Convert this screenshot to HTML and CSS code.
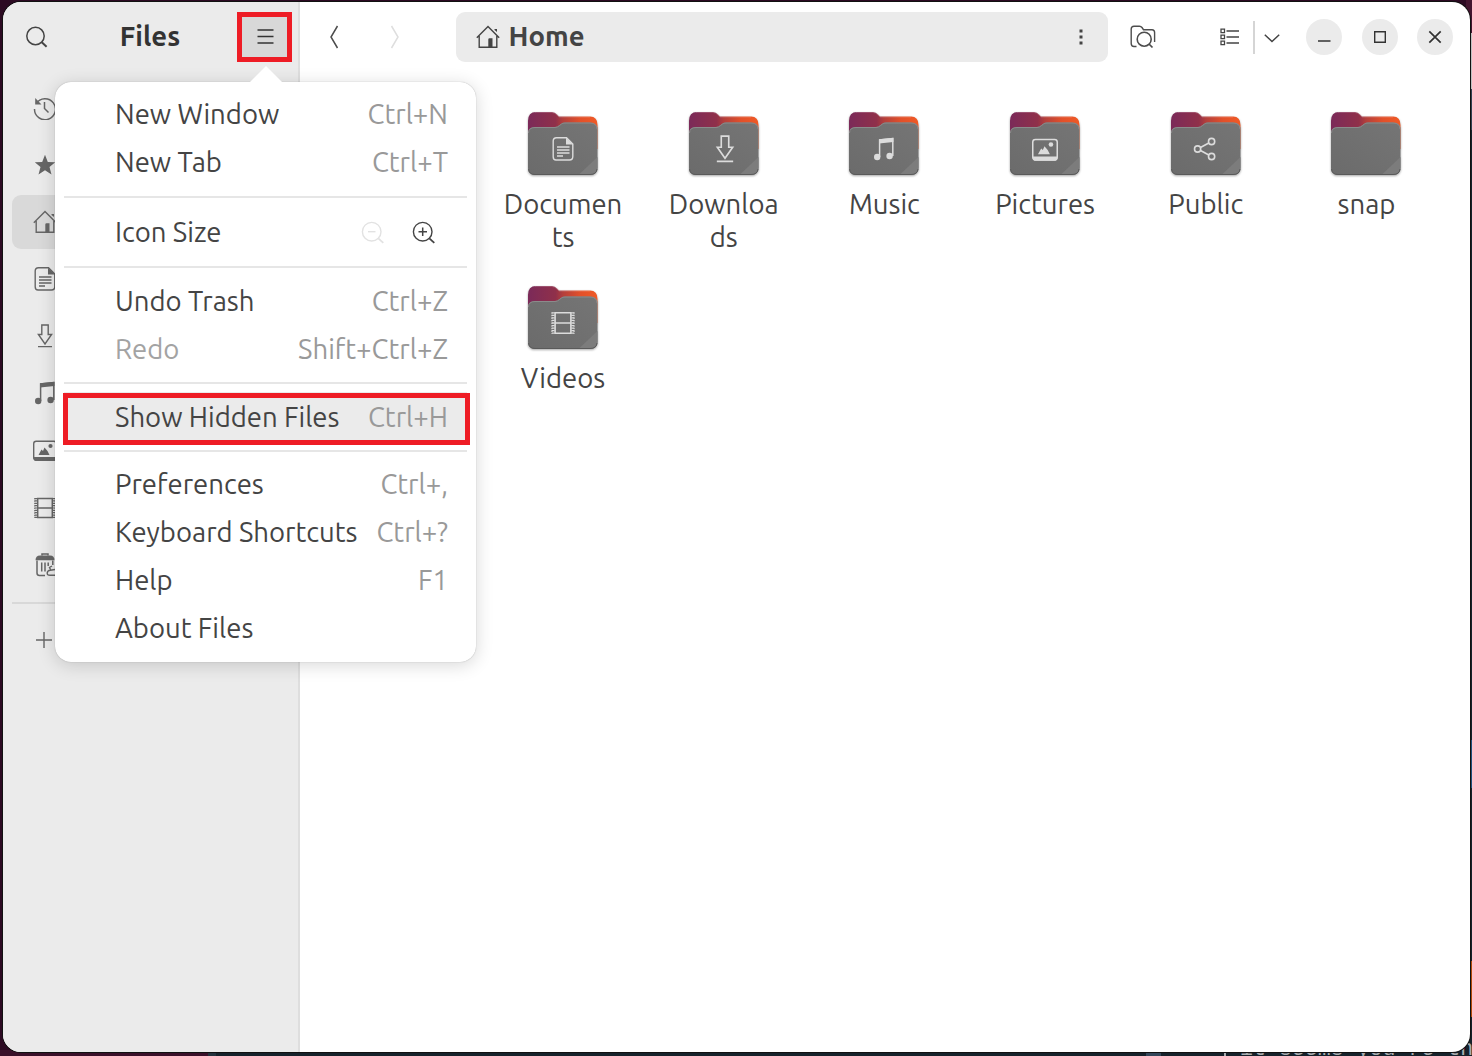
FILE: index.html
```html
<!DOCTYPE html>
<html lang="en">
<head>
<meta charset="utf-8">
<title>Files</title>
<link rel="stylesheet" href="styles.css">
</head>
<body>
<svg class="defs" aria-hidden="true">
  <defs>
    <linearGradient id="tab" x1="0" y1="0" x2="1" y2="0">
      <stop offset="0" stop-color="#7b2a59"/><stop offset=".4" stop-color="#90304a"/><stop offset=".5" stop-color="#b33f3c"/><stop offset=".75" stop-color="#e2502a"/><stop offset="1" stop-color="#f05a26"/>
    </linearGradient>
    <linearGradient id="front" x1="0" y1="1" x2="1" y2="0">
      <stop offset="0" stop-color="#6b6b6b"/><stop offset="1" stop-color="#757575"/>
    </linearGradient>
    <symbol id="folder" viewBox="0 0 76 74">
      <path d="M3 12Q3 3 11 3H27Q30 3 32 5.500L34 7.500H65Q72.500 7.500 72.500 16V40H3Z" fill="url(#tab)"/>
      <path d="M10 3.500H27Q30 3.500 32 6L34 8H65" fill="none" stroke="#fff" stroke-opacity=".18"/>
      <path d="M3 24Q3 18 10 18H30Q32.500 18 34.500 16L36.500 14.500Q37.500 13.500 40 13.500H65Q72.500 13.500 72.500 21V59Q72.500 66 65 66H10Q3 66 3 59Z" fill="url(#front)"/>
      <path d="M3.500 24Q3.500 18.500 10 18.500H30Q32.500 18.500 34.500 16.500L36.500 15Q37.500 14 40 14H65Q72 14 72 20" fill="none" stroke="#8b8b8b"/>
      <path d="M54 65.500L72.500 48V59Q72.500 65.500 65 65.500Z" fill="#7c7c7c"/>
      <path d="M3.500 60Q4 65.500 10 65.500H65Q71.500 65.500 72 60" fill="none" stroke="#5a5a5a"/>
    </symbol>
    <symbol id="recent" viewBox="0 0 24 24"><path d="M3.200 7.500A10.500 10.500 0 1 1 1.500 13M11.500 6V12.500L15.500 16.500" fill="none" stroke="currentColor" stroke-width="1.500"/><path d="M2.200 2V8.500H8.500Z" fill="currentColor"/></symbol>
    <symbol id="star" viewBox="0 0 24 24"><path d="M12 1.800L14.800 8.900L22.200 9.300L16.500 14.100L18.500 21.500L12 17.300L5.500 21.500L7.500 14.100L1.800 9.300L9.200 8.900Z" fill="currentColor"/></symbol>
    <symbol id="home" viewBox="0 0 24 24"><path d="M.8 12.800L12 1.500L23.200 12.800M3.200 11V22.300H20.800V11" fill="none" stroke="currentColor" stroke-width="1.400"/><path d="M12.300 22V14.500Q12.300 13.300 13.500 13.300H16.500V22ZM18.500 4H21V7L18.500 5Z" fill="currentColor"/></symbol>
    <symbol id="document" viewBox="0 0 24 24"><path d="M5.500 .8H15.500L21.800 7V19.500Q21.800 23 18.500 23H5Q2.200 23 2.200 19.800V4Q2.200 .8 5.500 .8ZM6 10H18.500M6 13H18.500M6 16H18.500M6 19H12" fill="none" stroke="currentColor" stroke-width="1.400"/><path d="M15 .8V7.500H22Z" fill="currentColor"/></symbol>
    <symbol id="download" viewBox="0 0 24 24"><path d="M8.800 1H15.200V10.500H18.600L12 20L5.400 10.500H8.800ZM5 22.600H19" fill="none" stroke="currentColor" stroke-width="1.400"/></symbol>
    <symbol id="music" viewBox="0 0 24 24"><path d="M7.600 20V3L20.800 1.600V19" fill="none" stroke="currentColor" stroke-width="1.500"/><path d="M7 2.300L21.400 .8V5L7 6.500Z" fill="currentColor"/><circle cx="5.200" cy="20" r="3.200" fill="currentColor"/><circle cx="17.600" cy="19" r="3.200" fill="currentColor"/></symbol>
    <symbol id="picture" viewBox="0 0 24 24"><rect x=".7" y="2.200" width="22.600" height="19" rx="2.500" fill="none" stroke="currentColor" stroke-width="1.400"/><path d="M.7 18H23.300V19.500Q23 22 20.500 22H3.500Q1 22 .7 19.500ZM5.500 16L8.500 10.500L10 12L11.500 8.500L14.500 12L16.500 16Z" fill="currentColor"/><circle cx="17.500" cy="7" r="2.100" fill="currentColor"/></symbol>
    <symbol id="video" viewBox="0 0 24 24"><path d="M4.700 2.500H19.300V21.500H4.700ZM4.700 12H19.300" fill="none" stroke="currentColor" stroke-width="1.500"/><path d="M1.800 2V22M22.200 2V22" fill="none" stroke="currentColor" stroke-dasharray="1.400 1"/><path d="M3 2V22M21 2V22" fill="none" stroke="currentColor" stroke-width="2.600" stroke-dasharray="1.200 1.150"/></symbol>
    <symbol id="trash" viewBox="0 0 24 24"><path d="M4 7.500V20Q4 22.500 6.500 22.500H12M8.700 9.500V18.500M12 9.500V18.500M15.200 9.500V13M19.800 7.500V12M9 2.500V1H15V2.500" fill="none" stroke="currentColor" stroke-width="1.500"/><path d="M2.500 7.300Q2.500 2.500 7 2.500H17Q21.500 2.500 21.500 7.300Z" fill="currentColor"/><path d="M17.500 16.500L16.500 14.500L19 13M17 22.300Q14 22.300 14.200 19.800Q14.500 17.500 17.300 17.200L22 16.500M17 22.300H23" fill="none" stroke="currentColor" stroke-width="1.400"/></symbol>
    <symbol id="share" viewBox="0 0 24 24"><g fill="none" stroke="currentColor" stroke-width="1.600"><circle cx="4.600" cy="12" r="3.100"/><circle cx="18.600" cy="4.500" r="3.100"/><circle cx="18.600" cy="19.500" r="3.100"/><path d="M7.500 10.500L15.800 6M7.500 13.500L15.800 18"/></g></symbol>
    <symbol id="search" viewBox="0 0 24 24"><circle cx="10.500" cy="11" r="8.700" fill="none" stroke="currentColor" stroke-width="1.500"/><path d="M16.800 17.200L21.600 21.700" stroke="currentColor" stroke-width="2"/></symbol>
    <symbol id="zoom" viewBox="0 0 24 24"><circle cx="10.700" cy="10.700" r="9.300" fill="none" stroke="currentColor" stroke-width="1.400"/><path d="M17.300 17.300L22.300 21.800" stroke="currentColor" stroke-width="1.800"/></symbol>
  </defs>
</svg>

<div class="terminal-line">it seems you're th</div>
<div class="window">
  <aside class="sidebar">
    <header class="side-header">
      <svg class="icon search"><use href="#search"/></svg>
      <h1>Files</h1>
      <button class="menu-button marked" aria-label="Menu"><svg width="17" height="15" viewBox="0 0 17 15"><path d="M.5 1H16.500M.5 7.500H16.500M.5 14H16.500" stroke="#333" stroke-width="1.400"/></svg></button>
    </header>
    <nav class="places">
      <a class="place"><svg class="icon"><use href="#recent"/></svg></a>
      <a class="place"><svg class="icon"><use href="#star"/></svg></a>
      <a class="place selected"><svg class="icon"><use href="#home"/></svg></a>
      <a class="place"><svg class="icon"><use href="#document"/></svg></a>
      <a class="place"><svg class="icon"><use href="#download"/></svg></a>
      <a class="place"><svg class="icon"><use href="#music"/></svg></a>
      <a class="place"><svg class="icon"><use href="#picture"/></svg></a>
      <a class="place"><svg class="icon"><use href="#video"/></svg></a>
      <a class="place"><svg class="icon"><use href="#trash"/></svg></a>
    </nav>
    <hr class="side-rule">
    <svg class="add" viewBox="0 0 18 18"><path d="M1 9H17M9 1V17" stroke="#666" stroke-width="1.400"/></svg>
  </aside>

  <main class="content">
    <header class="toolbar">
      <svg class="nav-arrow" viewBox="0 0 10 24"><path d="M8.500 1L2 12L8.500 23" fill="none" stroke="#4d4d4d" stroke-width="1.500"/></svg>
      <svg class="nav-arrow forward" viewBox="0 0 10 24"><path d="M1.500 1L8 12L1.500 23" fill="none" stroke="#dedede" stroke-width="1.500"/></svg>
      <div class="pathbar">
        <svg class="icon"><use href="#home"/></svg>
        <span class="path-name">Home</span>
        <svg class="dots" viewBox="0 0 4 18"><path d="M.5 1.500H3.500V4.500H.5ZM.5 7.500H3.500V10.500H.5ZM.5 13.500H3.500V16.500H.5Z" fill="#444"/></svg>
      </div>
      <svg class="folder-search" viewBox="0 0 26 24"><path d="M6.500 21.500H4Q1.200 21.500 1.200 18.500V4Q1.200 1.200 4 1.200H9.500Q11 1.200 12 2.500L13.500 4.700H22Q24.600 4.700 24.600 7.500V17" fill="none" stroke="#4d4d4d" stroke-width="1.400"/><circle cx="14.200" cy="14.200" r="7" fill="#fff" stroke="#4d4d4d" stroke-width="1.600"/><path d="M19 19L22.500 22.500" stroke="#4d4d4d" stroke-width="1.700"/></svg>
      <svg class="list-view" viewBox="0 0 20 18"><path d="M1 1.200H4.500V4.700H1ZM1 7.200H4.500V10.700H1ZM1 13.200H4.500V16.700H1Z" fill="none" stroke="#444" stroke-width="1.300"/><path d="M6.500 3H19M6.500 9H19M6.500 15H19" stroke="#444" stroke-width="1.400"/></svg>
      <span class="divider"></span>
      <svg class="view-options" viewBox="0 0 16 9"><path d="M.8 .8L8 7.500L15.200 .8" fill="none" stroke="#444" stroke-width="1.500"/></svg>
      <div class="controls">
        <button aria-label="Minimize"><svg viewBox="0 0 36 36"><path d="M12 22H24.500" stroke="#333" stroke-width="1.400"/></svg></button>
        <button aria-label="Maximize"><svg viewBox="0 0 36 36"><path d="M12.700 12.700H23.300V23.300H12.700Z" fill="none" stroke="#333" stroke-width="1.400"/></svg></button>
        <button aria-label="Close"><svg viewBox="0 0 36 36"><path d="M12.300 12.300L23.700 23.700M23.700 12.300L12.300 23.700" stroke="#333" stroke-width="1.700"/></svg></button>
      </div>
    </header>

    <section class="files">
      <figure><div class="folder"><svg><use href="#folder"/></svg><svg class="emblem"><use href="#document"/></svg></div><figcaption>Documen<br>ts</figcaption></figure>
      <figure><div class="folder"><svg><use href="#folder"/></svg><svg class="emblem big"><use href="#download"/></svg></div><figcaption>Downloa<br>ds</figcaption></figure>
      <figure><div class="folder"><svg><use href="#folder"/></svg><svg class="emblem"><use href="#music"/></svg></div><figcaption>Music</figcaption></figure>
      <figure><div class="folder"><svg><use href="#folder"/></svg><svg class="emblem picture"><use href="#picture"/></svg></div><figcaption>Pictures</figcaption></figure>
      <figure><div class="folder"><svg><use href="#folder"/></svg><svg class="emblem share"><use href="#share"/></svg></div><figcaption>Public</figcaption></figure>
      <figure><div class="folder"><svg><use href="#folder"/></svg></div><figcaption>snap</figcaption></figure>
      <figure><div class="folder"><svg><use href="#folder"/></svg><svg class="emblem video"><use href="#video"/></svg></div><figcaption>Videos</figcaption></figure>
    </section>
  </main>
</div>

<div class="popover">
  <svg class="pointer" viewBox="0 0 36 18"><path d="M1 18L18 1L35 18Z" fill="#fff"/></svg>
  <div class="group">
    <div class="item"><span>New Window</span><kbd>Ctrl+N</kbd></div>
    <div class="item"><span>New Tab</span><kbd>Ctrl+T</kbd></div>
  </div>
  <div class="group zoom-group">
    <div class="item sizes"><span>Icon Size</span>
      <svg class="zoom out" viewBox="0 0 24 24"><use href="#zoom"/><path d="M7 10.700H14.500" stroke="currentColor" stroke-width="1.400"/></svg>
      <svg class="zoom" viewBox="0 0 24 24"><use href="#zoom"/><path d="M6.500 10.700H15M10.700 6.500V15" stroke="currentColor" stroke-width="1.500"/></svg>
    </div>
  </div>
  <div class="group history-group">
    <div class="item"><span>Undo Trash</span><kbd>Ctrl+Z</kbd></div>
    <div class="item disabled"><span>Redo</span><kbd>Shift+Ctrl+Z</kbd></div>
  </div>
  <div class="group hidden-group">
    <div class="item highlighted"><span>Show Hidden Files</span><kbd>Ctrl+H</kbd></div>
  </div>
  <div class="group app-group">
    <div class="item"><span>Preferences</span><kbd>Ctrl+,</kbd></div>
    <div class="item"><span>Keyboard Shortcuts</span><kbd>Ctrl+?</kbd></div>
    <div class="item"><span>Help</span><kbd>F1</kbd></div>
    <div class="item"><span>About Files</span></div>
  </div>
  <div class="highlight-frame marked"></div>
</div>
</body>
</html>
```
FILE: styles.css
```css
* { box-sizing: border-box; }
body {
  margin: 0;
  width: 1472px;
  height: 1056px;
  padding: 2px 2px 4px 3px;
  overflow: hidden;
  position: relative;
  font-family: Ubuntu, "Noto Sans", sans-serif;
  font-size: 27.500px;
  color: #444;
  background:
    linear-gradient(#43152f 0 33px, #c0c0c0 33px 89px, #334152 89px 130px, #16222b 130px 740px, #20507c 740px 788px, #16222b 788px 961px, #b04a0a 961px 1017px, #16222b 1017px) right / 6px 100% no-repeat,
    linear-gradient(90deg, #3a1029 0 208px, #24323d 208px 216px, #16222b 216px 1146px, #33465a 1146px 1161px, #16222b 1161px 1224px, #a9adb0 1224px 1226px, #16222b 1226px) bottom / 100% 6px no-repeat,
    #2c0a22;
}
.defs { position: absolute; width: 0; height: 0; }
.terminal-line {
  position: absolute;
  left: 1240px;
  top: 1037px;
  font: 21.600px/24px "Liberation Mono", monospace;
  color: #a9adb0;
  white-space: nowrap;
}
button { border: 0; padding: 0; margin: 0; }
svg { display: block; flex: none; }
.icon { width: 24px; height: 24px; }
.marked { border: 5px solid #ee1c25; }

.window {
  position: relative;
  display: flex;
  height: 1050px;
  border-radius: 18px;
  overflow: hidden;
  background: #fff;
  box-shadow: 0 0 0 1px #111;
}
.sidebar {
  width: 297px;
  flex: none;
  background: #ebebeb;
  border-right: 2px solid #dedede;
}
.side-header {
  display: flex;
  align-items: center;
  height: 70px;
  padding-left: 22px;
}
.side-header h1 {
  flex: 1;
  margin: 0;
  padding: 0 0 2px 14px;
  text-align: center;
  font-size: 27.500px;
  line-height: 36px;
  color: #333;
}
.menu-button {
  width: 55px;
  height: 50px;
  margin-right: 6px;
  padding: 0 0 1px 1px;
  display: flex;
  align-items: center;
  justify-content: center;
  background: #d8d8d8;
}
.places {
  display: grid;
  grid-auto-rows: 54px;
  gap: 3.100px;
  padding: 9px 9px 0;
  color: #666;
}
.place {
  display: flex;
  align-items: center;
  padding-left: 20.500px;
  border-radius: 9px;
}
.selected { background: #d9d9d9; }
.side-rule { height: 2px; margin: 10px 9px 27px; border: 0; background: #d8d8d8; }
.add { width: 18px; height: 18px; margin-left: 32px; }

.content { flex: 1; }
.toolbar {
  display: flex;
  align-items: center;
  height: 70px;
  padding-left: 29px;
}
.nav-arrow { width: 10px; height: 24px; }
.forward { margin-left: 51px; }
.pathbar {
  display: flex;
  align-items: center;
  width: 652px;
  height: 50px;
  margin-left: 56px;
  padding: 0 25px 0 20px;
  border-radius: 9px;
  background: #ebebeb;
  color: #444;
}
.path-name { flex: 1; margin: 0 0 2px 8.500px; font-weight: 700; line-height: 36px; }
.dots { width: 4px; height: 18px; }
.folder-search { width: 26px; height: 24px; margin-left: 21.500px; }
.list-view { width: 20px; height: 18px; margin-left: 64.500px; }
.divider { width: 2px; height: 33px; margin-left: 13px; background: #d5d5d5; }
.view-options { width: 16px; height: 9px; margin: 2px 0 0 9px; }
.controls { display: flex; gap: 19.500px; margin-left: 26px; }
.controls button { width: 36px; height: 36px; border-radius: 50%; background: #ebebeb; }

.files {
  display: grid;
  grid-template-columns: repeat(6, 160.700px);
  grid-auto-rows: 174px;
  padding: 37px 0 0 182.700px;
}
figure { margin: 0; }
.folder { position: relative; width: 76px; height: 74px; margin: 0 auto; filter: drop-shadow(0 1px 1px rgba(0, 0, 0, .35)); }
.folder > svg { width: 76px; height: 74px; }
.folder > .emblem { position: absolute; left: 26px; top: 28px; width: 24px; height: 24px; color: #dcdcdc; }
.folder > .big { left: 25px; top: 26px; width: 28px; height: 28px; }
.folder > .share { left: 25px; }
.folder > .picture, .folder > .video { left: 25px; width: 26px; height: 26px; }
.folder > .video { top: 27px; }
figcaption { margin-top: 4px; line-height: 33px; text-align: center; white-space: nowrap; }

.popover {
  position: absolute;
  left: 55px;
  top: 82px;
  width: 421px;
  height: 580px;
  padding: 7px 9px;
  border-radius: 16px;
  background: #fff;
  box-shadow: 0 0 1px rgba(0, 0, 0, .35), 0 3px 18px rgba(0, 0, 0, .16);
}
.pointer { position: absolute; left: 192.500px; top: -17px; width: 36px; height: 18px; }
.group + .group { border-top: 2px solid #e6e6e6; }
.zoom-group { margin-top: 11px; padding-top: 9px; }
.history-group { margin-top: 11px; padding-top: 8px; }
.hidden-group { margin-top: 10px; padding-top: 8px; }
.app-group { margin-top: 10px; padding-top: 7px; }
.item {
  display: flex;
  align-items: center;
  justify-content: space-between;
  height: 48px;
  padding: 0 19px 0 51px;
  white-space: nowrap;
}
.item kbd { font: inherit; color: #999; }
.disabled { color: #a3a3a3; }
.highlighted { background: #ebebeb; }
.zoom { width: 24px; height: 24px; margin-top: 4px; color: #444; }
.out { margin-left: auto; margin-right: 27px; color: #e2e2e2; }
.item.sizes { padding-right: 31px; }
.highlight-frame { position: absolute; left: 8px; top: 311px; width: 407px; height: 52px; }
```
